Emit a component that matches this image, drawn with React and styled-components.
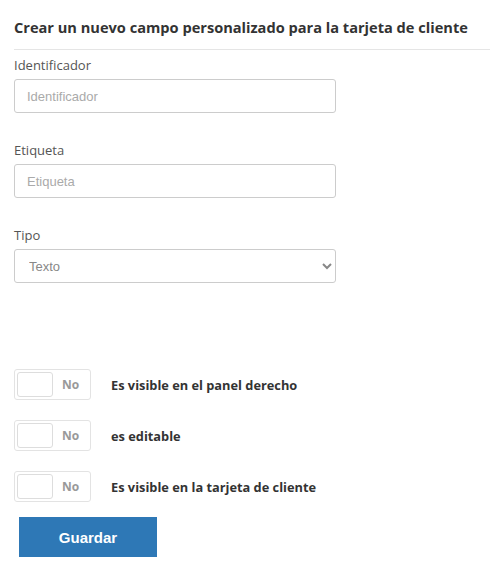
import styled, { createGlobalStyle } from 'styled-components'

const GlobalStyle = createGlobalStyle`
  body {
    margin: 0;
    background: #fff;
    font-family: 'Open Sans', sans-serif;
  }
`

const Page = styled.div`
  padding: 14px 12px 0 14px;
`

const Title = styled.h3`
  margin: 0;
  font-size: 14.6px;
  font-weight: 700;
  color: #333;
  line-height: 26px;
`

const Divider = styled.hr`
  border: 0;
  border-top: 1px solid #e5e5e5;
  margin: 9px 0 6px;
`

const Field = styled.div`
  margin-bottom: 28px;
`

const Label = styled.label`
  display: block;
  font-size: 13px;
  color: #555;
  line-height: 18px;
  margin-bottom: 5px;
`

const Input = styled.input`
  box-sizing: border-box;
  width: 322px;
  height: 34px;
  padding: 6px 12px;
  border: 1px solid #ccc;
  border-radius: 3px;
  font-family: 'Liberation Sans', Arial, sans-serif;
  font-size: 13px;
  color: #555;
  &::placeholder {
    color: #aaa;
  }
`

const Select = styled.select`
  box-sizing: border-box;
  width: 322px;
  height: 34px;
  padding: 6px 10px;
  border: 1px solid #ccc;
  border-radius: 3px;
  background: #fff;
  font-family: 'Liberation Sans', Arial, sans-serif;
  font-size: 13px;
  color: #888;
`

const Toggles = styled.div`
  margin-top: 86px;
  display: flex;
  flex-direction: column;
  gap: 20px;
`

const ToggleRow = styled.div`
  display: flex;
  align-items: center;
  gap: 20px;
`

const Switch = styled.div`
  box-sizing: border-box;
  width: 77px;
  height: 31px;
  border: 1px solid #e3e3e3;
  border-radius: 3px;
  padding: 2px;
  display: flex;
  align-items: stretch;
`

const Knob = styled.span`
  box-sizing: border-box;
  width: 36px;
  border: 1px solid #ddd;
  border-radius: 3px;
  background: #fff;
`

const SwitchText = styled.span`
  flex: 1;
  display: flex;
  align-items: center;
  justify-content: center;
  font-size: 12px;
  font-weight: 700;
  color: #999;
`

const ToggleLabel = styled.span`
  font-size: 12.8px;
  font-weight: 700;
  color: #333;
`

const SaveButton = styled.button`
  margin: 15px 0 0 5px;
  width: 138px;
  height: 40px;
  border: 0;
  background: #2e78b6;
  color: #fff;
  font-family: 'Liberation Sans', Arial, sans-serif;
  font-size: 15px;
  font-weight: 700;
  cursor: pointer;
`

const toggles = [
  'Es visible en el panel derecho',
  'es editable',
  'Es visible en la tarjeta de cliente',
]

export default function App() {
  return (
    <>
      <GlobalStyle />
      <Page>
        <Title>Crear un nuevo campo personalizado para la tarjeta de cliente</Title>
        <Divider />
        <Field>
          <Label>Identificador</Label>
          <Input placeholder='Identificador' />
        </Field>
        <Field>
          <Label>Etiqueta</Label>
          <Input placeholder='Etiqueta' />
        </Field>
        <Field>
          <Label>Tipo</Label>
          <Select defaultValue='texto'>
            <option value='texto'>Texto</option>
          </Select>
        </Field>
        <Toggles>
          {toggles.map((t) => (
            <ToggleRow key={t}>
              <Switch>
                <Knob />
                <SwitchText>No</SwitchText>
              </Switch>
              <ToggleLabel>{t}</ToggleLabel>
            </ToggleRow>
          ))}
        </Toggles>
        <SaveButton>Guardar</SaveButton>
      </Page>
    </>
  )
}
